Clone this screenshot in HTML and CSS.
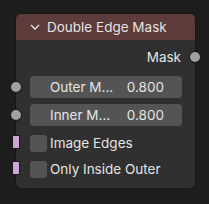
FILE: index.html
```html
<!DOCTYPE html>
<html>
<head>
<meta charset="utf-8">
<title>Double Edge Mask</title>
<link rel="stylesheet" href="styles.css">
</head>
<body>
<div class="node">
	<div class="nodeHeader">
		<svg class="chevron" width="10" height="6" viewBox="0 0 10 6"><path d="M1 1 L5 5 L9 1" fill="none" stroke="#e6e6e6" stroke-width="1.3"/></svg>
		<span>Double Edge Mask</span>
	</div>
	<div class="nodeBody">
		<div class="outRow">
			<span>Mask</span>
			<i class="sock sockOut"></i>
		</div>
		<div class="field">
			<i class="sock sockIn"></i>
			<span>Outer M...</span>
			<span>0.800</span>
		</div>
		<div class="field">
			<i class="sock sockIn"></i>
			<span>Inner M...</span>
			<span>0.800</span>
		</div>
		<div class="checkRow">
			<i class="bool"></i>
			<span class="check"></span>
			<span>Image Edges</span>
		</div>
		<div class="checkRow">
			<i class="bool"></i>
			<span class="check"></span>
			<span>Only Inside Outer</span>
		</div>
	</div>
</div>
</body>
</html>
```
FILE: styles.css
```css
body {
	margin: 0;
	background-color: #1d1d1d;
	font-family: Inter, "Noto Sans", sans-serif;
	font-size: 13.5px;
	color: #e4e4e4;
}
.node {
	margin: 14px 0 0 16px;
	width: 179px;
	height: 174px;
	background-color: #303030;
	border-radius: 5px;
	box-shadow: 0 0 0 1px #171717;
}
.nodeHeader {
	height: 26px;
	display: flex;
	align-items: center;
	background-color: #5c3b3a;
	border-radius: 5px 5px 0 0;
	padding-left: 14px;
}
.chevron { margin-right: 7px; }
.nodeBody {
	display: flex;
	flex-direction: column;
	padding: 6px 13px 0 14px;
}
.sock {
	position: absolute;
	display: block;
}
.sockOut, .sockIn {
	width: 10px;
	height: 10px;
	border-radius: 50%;
	background-color: #a1a1a1;
	box-shadow: 0 0 0 1px #1a1a1a;
}
.outRow {
	position: relative;
	height: 22px;
	display: flex;
	align-items: center;
	justify-content: flex-end;
	padding-right: 1px;
}
.sockOut { right: -18px; top: 6px; }
.field {
	position: relative;
	height: 22px;
	margin-top: 8px;
	display: flex;
	align-items: center;
	justify-content: space-between;
	padding: 0 18px 0 20px;
	background-color: #545454;
	border-radius: 4px;
}
.field + .field { margin-top: 6px; }
.sockIn { left: -19px; top: 6px; }
.checkRow {
	position: relative;
	height: 18px;
	margin-top: 8px;
	display: flex;
	align-items: center;
}
.checkRow span:last-child { margin-left: 3px; }
.check {
	width: 17px;
	height: 17px;
	background-color: #545454;
	border-radius: 3px;
}
.bool {
	position: absolute;
	left: -17px;
	top: 2px;
	width: 6px;
	height: 12px;
	background-color: #cca6d6;
	box-shadow: 0 0 0 1px #1a1a1a;
}
```
